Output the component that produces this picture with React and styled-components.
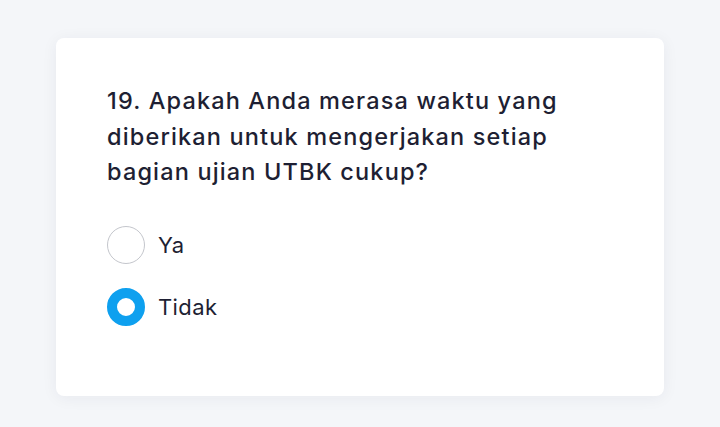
import React, { useState } from 'react'
import styled, { createGlobalStyle } from 'styled-components'

const Global = createGlobalStyle`
  html, body {
    margin: 0;
    padding: 0;
    background: #f4f6f9;
  }
  body {
    font-family: 'Inter', 'Noto Sans', sans-serif;
    color: #1e1f33;
  }
`

const Page = styled.main`
  min-height: 427px;
  box-sizing: border-box;
  padding: 38px 56px 0;
`

const Card = styled.section`
  background: #fff;
  border-radius: 8px;
  height: 358px;
  box-sizing: border-box;
  padding: 45px 51px 0;
  box-shadow: 0 2px 16px rgba(30, 40, 70, 0.06);
`

const Question = styled.h2`
  margin: 0 0 36px;
  font-size: 23.5px;
  font-weight: 500;
  line-height: 35.5px;
  letter-spacing: 1.15px;
  max-width: 470px;
`

const Options = styled.div`
  display: flex;
  flex-direction: column;
  gap: 24px;
`

const Option = styled.label`
  display: flex;
  align-items: center;
  gap: 13px;
  font-size: 22px;
  font-weight: 400;
  letter-spacing: 0.4px;
  cursor: pointer;
`

const Radio = styled.span`
  width: 38px;
  height: 38px;
  box-sizing: border-box;
  border-radius: 50%;
  border: ${({ checked }) => (checked ? '10px solid #0ea0ef' : '1px solid #c4c6cc')};
  background: #fff;
  flex-shrink: 0;
`

const options = ['Ya', 'Tidak']

export default function App() {
  const [value, setValue] = useState('Tidak')
  return (
    <Page>
      <Global />
      <Card>
        <Question>19. Apakah Anda merasa waktu yang diberikan untuk mengerjakan setiap bagian ujian UTBK cukup?</Question>
        <Options>
          {options.map((o) => (
            <Option key={o} onClick={() => setValue(o)}>
              <Radio checked={value === o} />
              {o}
            </Option>
          ))}
        </Options>
      </Card>
    </Page>
  )
}
